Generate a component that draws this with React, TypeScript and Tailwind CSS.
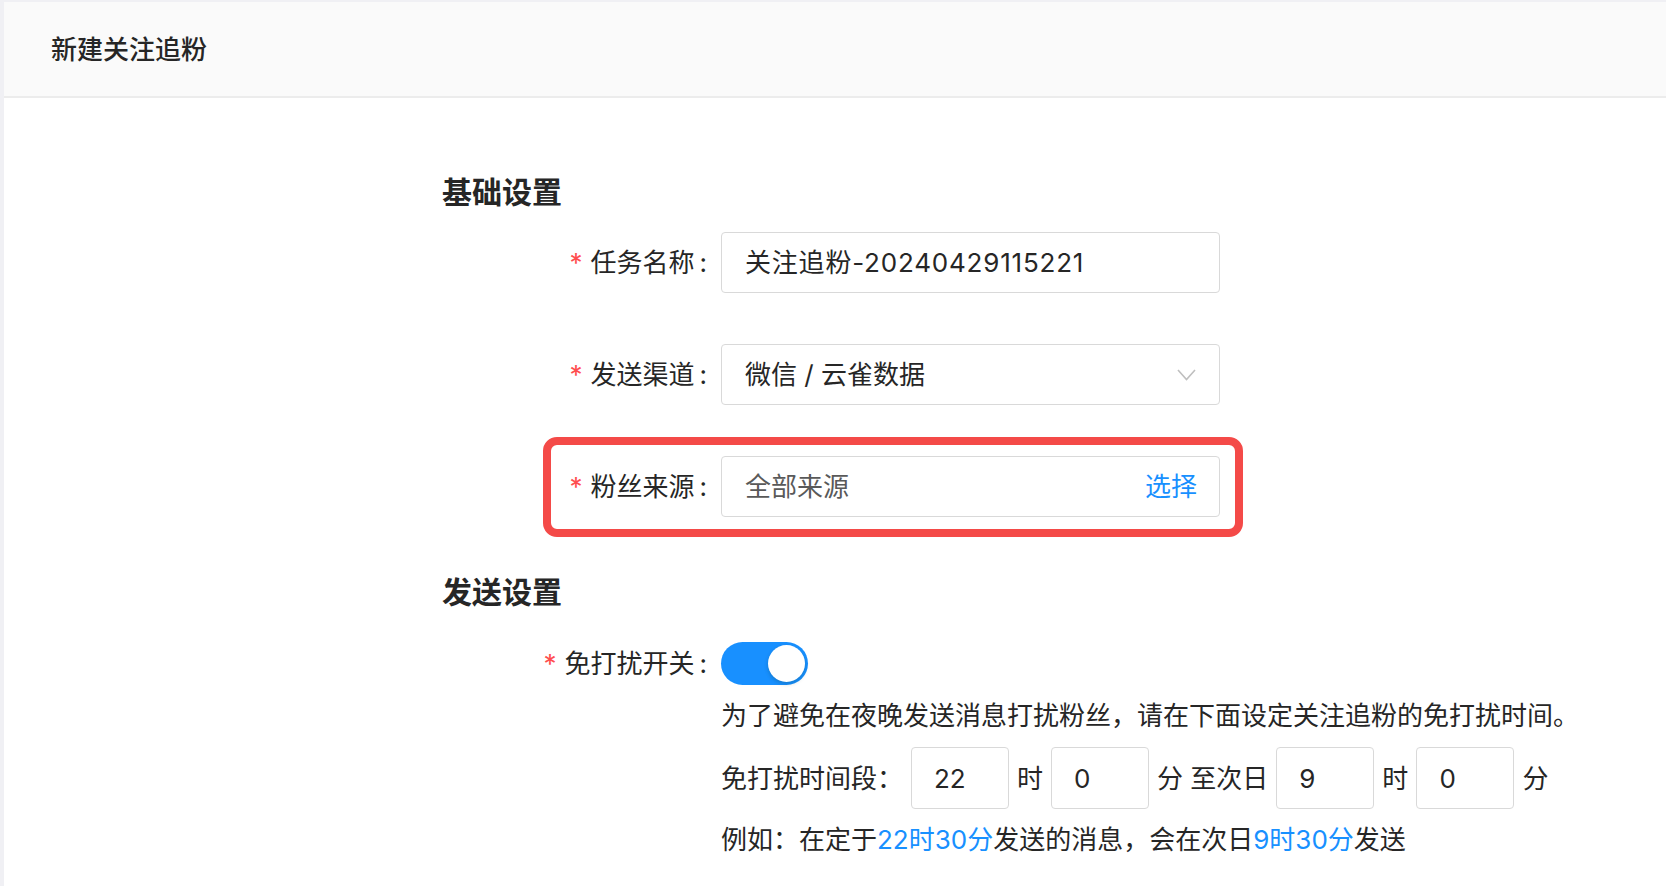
import React from 'react';

const font = { fontFamily: 'Inter, "Noto Sans CJK SC", sans-serif' };

function Label({ text }: { text: string }) {
  return (
    <div className="w-[279px] shrink-0 flex items-center justify-end pr-[14px] text-[26px] text-[#262626]">
      <span className="text-[#ff4d4f] mr-[8px] text-[26px]">*</span>
      <span>{text}</span>
      <span className="ml-[5px]">:</span>
    </div>
  );
}

function TimeBox({ value }: { value: string }) {
  return (
    <div className="w-[98px] h-[62px] shrink-0 border border-[#d9d9d9] rounded-[4px] bg-white flex items-center pl-[22px] text-[26px] text-[#262626]">
      {value}
    </div>
  );
}

export default function App() {
  return (
    <div style={font} className="min-h-screen bg-[#f0f0f4] pl-[4px] pt-[2px]">
      <div className="bg-white min-h-[884px]">
        {/* 标题栏 */}
        <div className="h-[96px] bg-[#fafafa] border-b-2 border-[#ececec] flex items-center pl-[47px]">
          <h1 className="text-[26px] font-medium text-[#262626]">新建关注追粉</h1>
        </div>

        <div className="pl-[438px] pt-[74px] pb-[20px]">
          <h2 className="h-[40px] leading-[40px] text-[30px] font-bold text-[#262626]">基础设置</h2>

          <div className="flex items-center mt-[20px] h-[61px]">
            <Label text="任务名称" />
            <div className="w-[499px] h-[61px] border border-[#d9d9d9] rounded-[4px] flex items-center pl-[23px] text-[26px] tracking-[0.8px] text-[#262626]">
              关注追粉-20240429115221
            </div>
          </div>

          <div className="flex items-center mt-[51px] h-[61px]">
            <Label text="发送渠道" />
            <div className="w-[499px] h-[61px] border border-[#d9d9d9] rounded-[4px] flex items-center justify-between pl-[23px] pr-[23px] text-[26px] text-[#262626]">
              <span>微信 / 云雀数据</span>
              <svg width="19" height="12" viewBox="0 0 19 12" fill="none">
                <polyline points="1,1 9.5,10.5 18,1" stroke="#bfbfbf" strokeWidth="1.6" />
              </svg>
            </div>
          </div>

          <div className="relative flex items-center mt-[51px] h-[61px] w-[778px]">
            <div className="absolute left-[101px] -right-[23px] -top-[19px] -bottom-[20px] border-[8px] border-[#f44a48] rounded-[14px] pointer-events-none" />
            <Label text="粉丝来源" />
            <div className="w-[499px] h-[61px] border border-[#d9d9d9] rounded-[4px] flex items-center justify-between pl-[23px] pr-[22px] text-[26px]">
              <span className="text-[#595959]">全部来源</span>
              <span className="text-[#1890ff]">选择</span>
            </div>
          </div>

          <h2 className="mt-[55px] h-[40px] leading-[40px] text-[30px] font-bold text-[#262626]">发送设置</h2>

          <div className="flex items-center mt-[30px] h-[43px]">
            <Label text="免打扰开关" />
            <div className="w-[87px] h-[43px] rounded-full bg-[#1890ff] relative">
              <div className="absolute right-[3px] top-[3px] w-[37px] h-[37px] rounded-full bg-white shadow-[0_2px_4px_rgba(0,35,11,0.2)]" />
            </div>
          </div>

          <div className="ml-[279px] mt-[11px] h-[40px] leading-[40px] text-[26px] text-[#262626]">
            为了避免在夜晚发送消息打扰粉丝，请在下面设定关注追粉的免打扰时间。
          </div>

          <div className="ml-[279px] mt-[11px] h-[62px] flex items-center gap-[8px] text-[26px] text-[#262626]">
            <span>免打扰时间段：</span>
            <TimeBox value="22" />
            <span>时</span>
            <TimeBox value="0" />
            <span>分 至次日</span>
            <TimeBox value="9" />
            <span>时</span>
            <TimeBox value="0" />
            <span>分</span>
          </div>

          <div className="ml-[279px] mt-[11px] h-[40px] leading-[40px] text-[26px] text-[#262626]">
            例如：在定于<span className="text-[#1890ff]">22时30分</span>发送的消息，会在次日<span className="text-[#1890ff]">9时30分</span>发送
          </div>
        </div>
      </div>
    </div>
  );
}
